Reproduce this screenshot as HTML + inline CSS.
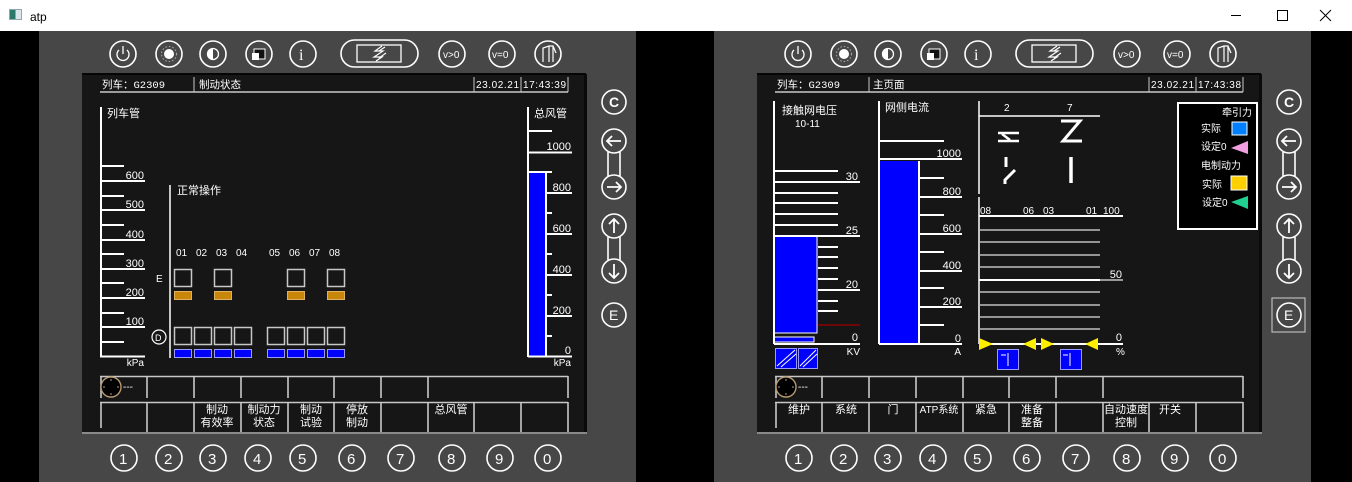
<!DOCTYPE html>
<html><head><meta charset="utf-8"><style>
html,body{margin:0;padding:0;background:#000;width:1352px;height:482px;overflow:hidden}
svg{display:block}
text{font-family:"Liberation Sans","Noto Sans CJK SC","WenQuanYi Zen Hei",sans-serif;fill:#fff;font-size:11px}
.m{font-family:"Liberation Mono","Noto Sans CJK SC",monospace}
.d{font-family:"Liberation Sans",sans-serif;font-size:10px}
.w{stroke:#fff;fill:none}
.g{stroke:#c8c8c8;fill:none}
</style></head><body>
<svg width="1352" height="482" viewBox="0 0 1352 482" xmlns="http://www.w3.org/2000/svg">
<rect x="0" y="0" width="1352" height="31" fill="#fff"/>
<rect x="0" y="31" width="1352" height="451" fill="#000"/>
<rect x="9" y="9" width="13" height="11" fill="#8fa7b4"/><rect x="10" y="10" width="5" height="9" fill="#2a7a6a"/><rect x="16" y="10" width="5" height="9" fill="#dde6ea"/>
<text x="30" y="21" style="fill:#000;font-size:12px">atp</text>
<line x1="1231" y1="15.5" x2="1241" y2="15.5" stroke="#000"/>
<rect x="1277.5" y="10.5" width="10" height="10" fill="none" stroke="#000"/>
<path d="M1320 10 L1331 21 M1331 10 L1320 21" stroke="#000"/>

<defs>
<g id="chrome">
<rect x="39" y="31" width="597" height="451" fill="#474747"/>
<rect x="82" y="74" width="504" height="359" fill="#161616"/>
<rect x="82" y="73" width="504" height="2" fill="#050505"/>
<rect x="584" y="74" width="3" height="359" fill="#0a0a0a"/>
<rect x="82" y="432" width="505" height="2" fill="#8a8a8a"/>
<g class="w" stroke-width="1.6">
<circle cx="123" cy="54" r="13"/><circle cx="169" cy="54" r="13"/><circle cx="213" cy="54" r="13"/><circle cx="259" cy="54" r="13"/><circle cx="303" cy="54" r="13"/>
<rect x="341" y="40" width="77" height="27" rx="13.5"/>
<circle cx="452" cy="54" r="13"/><circle cx="502" cy="54" r="13"/><circle cx="548" cy="54" r="13"/>
<path d="M119 50 A6 6 0 1 0 127 50 M123 46 L123 54" stroke-width="1.3"/>
<rect x="357" y="45" width="44" height="17" stroke-width="1.3"/>
<path d="M382 46 L375 51 L383 51 L374 57 L382 57 L376 61 M385 47 L379 51 M386 53 L379 58" stroke-width="1.2"/>
<path d="M543 62 L543 48 L549 46 L553 46 L553 62 M549 46 L549 62 M553 46 L556 53" stroke-width="1.2"/>
</g>
<circle cx="169" cy="54" r="5" fill="#fff"/>
<circle cx="169" cy="54" r="7.5" fill="none" stroke="#aaa" stroke-dasharray="1.5 2"/>
<circle cx="213" cy="54" r="5.5" fill="none" stroke="#fff" stroke-width="1.3"/>
<path d="M213 48.5 A5.5 5.5 0 0 0 213 59.5 Z" fill="#fff"/>
<rect x="254" y="49" width="11" height="10" fill="#111" stroke="#fff" stroke-width="1"/>
<rect x="252" y="53" width="7" height="7" fill="#fff"/>
<text x="299" y="60" style="font-size:16px;font-family:'Liberation Serif',serif">i</text>
<text x="443" y="58" style="font-size:10px">v&gt;0</text>
<text x="492" y="58" style="font-size:10px">v=0</text>
<g class="w" stroke-width="1.6">
<circle cx="614" cy="102" r="12"/>
<circle cx="614" cy="141" r="12"/><circle cx="614" cy="187" r="12"/>
<line x1="608" y1="152" x2="608" y2="176"/><line x1="620" y1="152" x2="620" y2="176"/>
<circle cx="614" cy="226" r="12"/><circle cx="614" cy="271" r="12"/>
<line x1="608" y1="237" x2="608" y2="260"/><line x1="620" y1="237" x2="620" y2="260"/>
<circle cx="614" cy="315" r="12"/>
<path d="M621 141 L607 141 M612 136 L607 141 L612 146 M607 187 L621 187 M616 182 L621 187 L616 192 M614 233 L614 219 M609 224 L614 219 L619 224 M614 264 L614 278 M609 273 L614 278 L619 273" stroke-width="1.8"/>
</g>
<text x="609" y="107" style="font-size:14px;font-weight:bold">C</text>
<text x="609" y="320" style="font-size:14px">E</text>
<g class="w" stroke-width="1.6">
<circle cx="124" cy="458" r="13"/><circle cx="169" cy="458" r="13"/><circle cx="213" cy="458" r="13"/><circle cx="258" cy="458" r="13"/><circle cx="303" cy="458" r="13"/><circle cx="352" cy="458" r="13"/><circle cx="401" cy="458" r="13"/><circle cx="452" cy="458" r="13"/><circle cx="500" cy="458" r="13"/><circle cx="548" cy="458" r="13"/>
</g>
<g>
<text x="119" y="464" style="font-size:15px">1</text><text x="164" y="464" style="font-size:15px">2</text><text x="208" y="464" style="font-size:15px">3</text><text x="253" y="464" style="font-size:15px">4</text><text x="298" y="464" style="font-size:15px">5</text><text x="347" y="464" style="font-size:15px">6</text><text x="396" y="464" style="font-size:15px">7</text><text x="447" y="464" style="font-size:15px">8</text><text x="495" y="464" style="font-size:15px">9</text><text x="543" y="464" style="font-size:15px">0</text>
</g>
<line x1="100" y1="92" x2="568" y2="92" class="g" stroke-width="1.5"/>
<line x1="194" y1="77" x2="194" y2="92" class="g"/>
<line x1="474" y1="77" x2="474" y2="92" class="g"/>
<line x1="521" y1="77" x2="521" y2="92" class="g"/>
<line x1="568" y1="77" x2="568" y2="92" class="g"/>
<g class="g" stroke-width="1.6">
<line x1="100" y1="376.5" x2="568" y2="376.5"/>
<line x1="100" y1="402.5" x2="568" y2="402.5"/>
<path d="M101 376 V398 M147 376 V398 M194 376 V398 M241 376 V398 M288 376 V398 M334 376 V398 M381 376 V398 M428 376 V398 M568 376 V398"/>
<path d="M101 402 V428 M147 402 V432 M194 402 V432 M241 402 V432 M288 402 V432 M334 402 V432 M381 402 V432 M428 402 V432 M474 402 V432 M521 402 V432 M568 402 V432"/>
</g>
<circle cx="111" cy="387" r="10" fill="#000" stroke="#b89a70" stroke-width="1.4"/>
<path d="M111 379 V381 M111 393 V395 M103 387 H105 M117 387 H119" stroke="#b89a70"/>
<text x="123" y="390" style="font-size:10px">---</text>
</g>
</defs>

<use href="#chrome"/>
<use href="#chrome" transform="translate(675,0)"/>
<rect x="1272" y="298" width="33" height="34" fill="none" stroke="#bbb" stroke-width="1.2"/>

<text x="102" y="88" class="m" style="font-size:10.5px">列车：G2309</text>
<text x="199" y="88" style="font-size:10.5px">制动状态</text>
<text x="476" y="88" class="d" textLength="43">23.02.21</text>
<text x="523" y="88" class="d" textLength="43">17:43:39</text>

<g class="w" stroke-width="2">
<line x1="101" y1="107" x2="101" y2="357"/>
<path d="M100 166 H124 M100 181 H145 M100 196 H124 M100 210 H145 M100 225 H124 M100 240 H145 M100 254 H124 M100 269 H145 M100 283 H124 M100 298 H145 M100 313 H124 M100 327 H145 M100 342 H124 M100 356.5 H145"/>
</g>
<text x="107" y="117">列车管</text>
<text x="144" y="179" text-anchor="end">600</text>
<text x="144" y="208" text-anchor="end">500</text>
<text x="144" y="238" text-anchor="end">400</text>
<text x="144" y="267" text-anchor="end">300</text>
<text x="144" y="296" text-anchor="end">200</text>
<text x="144" y="325" text-anchor="end">100</text>
<text x="144" y="366" text-anchor="end" style="font-size:10px">kPa</text>

<line x1="170" y1="185" x2="170" y2="358" class="w" stroke-width="1.5"/>
<text x="177" y="194">正常操作</text>
<text x="176" y="256" style="font-size:10px">01</text><text x="196" y="256" style="font-size:10px">02</text><text x="216" y="256" style="font-size:10px">03</text><text x="236" y="256" style="font-size:10px">04</text>
<text x="269" y="256" style="font-size:10px">05</text><text x="289" y="256" style="font-size:10px">06</text><text x="309" y="256" style="font-size:10px">07</text><text x="329" y="256" style="font-size:10px">08</text>
<text x="156" y="282" style="font-size:10px">E</text>
<circle cx="159" cy="337" r="7" class="w" stroke-width="1.2"/>
<text x="155" y="341" style="font-size:9px">D</text>
<g fill="none" stroke="#c8c8c8" stroke-width="1.5">
<rect x="174.5" y="269.5" width="17" height="17"/><rect x="214.5" y="269.5" width="17" height="17"/><rect x="287.5" y="269.5" width="17" height="17"/><rect x="327.5" y="269.5" width="17" height="17"/>
<rect x="174.5" y="327.5" width="17" height="17"/><rect x="194.5" y="327.5" width="17" height="17"/><rect x="214.5" y="327.5" width="17" height="17"/><rect x="234.5" y="327.5" width="17" height="17"/>
<rect x="267.5" y="327.5" width="17" height="17"/><rect x="287.5" y="327.5" width="17" height="17"/><rect x="307.5" y="327.5" width="17" height="17"/><rect x="327.5" y="327.5" width="17" height="17"/>
</g>
<g fill="#c8860a" stroke="#e0b060" stroke-width="1">
<rect x="174.5" y="291.5" width="17" height="8"/><rect x="214.5" y="291.5" width="17" height="8"/><rect x="287.5" y="291.5" width="17" height="8"/><rect x="327.5" y="291.5" width="17" height="8"/>
</g>
<g fill="#0000ff" stroke="#9a9aff" stroke-width="1">
<rect x="174.5" y="349.5" width="17" height="8"/><rect x="194.5" y="349.5" width="17" height="8"/><rect x="214.5" y="349.5" width="17" height="8"/><rect x="234.5" y="349.5" width="17" height="8"/>
<rect x="267.5" y="349.5" width="17" height="8"/><rect x="287.5" y="349.5" width="17" height="8"/><rect x="307.5" y="349.5" width="17" height="8"/><rect x="327.5" y="349.5" width="17" height="8"/>
</g>

<rect x="529" y="173" width="17" height="183" fill="#0000ff"/>
<g class="w" stroke-width="2">
<line x1="528" y1="107" x2="528" y2="357"/>
<line x1="546" y1="173" x2="546" y2="357"/>
<path d="M528 131 H552 M528 152.5 H572 M528 172 H552 M546 193 H572 M546 213 H552 M546 234 H572 M546 254 H552 M546 275 H572 M546 295 H552 M546 316 H572 M546 336 H552 M528 356.5 H572"/>
</g>
<text x="534" y="117">总风管</text>
<text x="571" y="150" text-anchor="end">1000</text>
<text x="571" y="191" text-anchor="end">800</text>
<text x="571" y="232" text-anchor="end">600</text>
<text x="571" y="273" text-anchor="end">400</text>
<text x="571" y="314" text-anchor="end">200</text>
<text x="571" y="354" text-anchor="end">0</text>
<text x="571" y="366" text-anchor="end" style="font-size:10px">kPa</text>

<text x="217" y="413" text-anchor="middle">制动</text><text x="217" y="426" text-anchor="middle">有效率</text>
<text x="264" y="413" text-anchor="middle">制动力</text><text x="264" y="426" text-anchor="middle">状态</text>
<text x="311" y="413" text-anchor="middle">制动</text><text x="311" y="426" text-anchor="middle">试验</text>
<text x="357" y="413" text-anchor="middle">停放</text><text x="357" y="426" text-anchor="middle">制动</text>
<text x="451" y="413" text-anchor="middle">总风管</text>

<text x="777" y="88" class="m" style="font-size:10.5px">列车：G2309</text>
<text x="873" y="88" style="font-size:10.5px">主页面</text>
<text x="1151" y="88" class="d" textLength="43">23.02.21</text>
<text x="1198" y="88" class="d" textLength="43">17:43:38</text>

<rect x="774" y="236" width="43" height="97" fill="#0000ff" stroke="#fff" stroke-width="1"/>
<rect x="774" y="337" width="40" height="5" fill="#0000ff" stroke="#fff" stroke-width="1"/>
<g class="w" stroke-width="2">
<line x1="774" y1="101" x2="774" y2="344"/>
<path d="M774 171 H838 M774 182 H860 M774 193 H838 M774 203 H838 M774 214 H838 M774 225 H838 M774 236 H860 M818 247 H838 M818 257 H838 M818 268 H838 M818 279 H838 M818 290 H860 M818 301 H838 M818 311 H838 M774 344 H860"/>
</g>
<line x1="818" y1="325" x2="860" y2="325" stroke="#8a0000" stroke-width="1.5"/>
<text x="782" y="114">接触网电压</text>
<text x="795" y="127" style="font-size:10px">10-11</text>
<text x="858" y="180" text-anchor="end">30</text>
<text x="858" y="234" text-anchor="end">25</text>
<text x="858" y="288" text-anchor="end">20</text>
<text x="858" y="341" text-anchor="end">0</text>
<text x="860" y="355" text-anchor="end" style="font-size:10px">KV</text>
<g fill="#0000ff" stroke="#9a9aff" stroke-width="1">
<rect x="775.5" y="348.5" width="21" height="20"/><rect x="798.5" y="348.5" width="19" height="20"/>
</g>
<path d="M777 366 L795 350 M781 367 L796 354 M800 366 L816 350 M803 367 L817 354" stroke="#fff" stroke-width="1"/>

<rect x="880" y="161" width="38" height="182" fill="#0000ff"/>
<g class="w" stroke-width="2">
<line x1="879" y1="101" x2="879" y2="344"/>
<line x1="919" y1="161" x2="919" y2="344"/>
<path d="M879 141 H944 M879 159 H962 M919 178 H944 M919 197 H962 M919 215 H944 M919 234 H962 M919 252 H944 M919 271 H962 M919 288 H944 M919 307 H962 M919 325 H944 M879 344 H962"/>
</g>
<text x="885" y="111">网侧电流</text>
<text x="961" y="157" text-anchor="end">1000</text>
<text x="961" y="195" text-anchor="end">800</text>
<text x="961" y="232" text-anchor="end">600</text>
<text x="961" y="269" text-anchor="end">400</text>
<text x="961" y="305" text-anchor="end">200</text>
<text x="961" y="342" text-anchor="end">0</text>
<text x="961" y="355" text-anchor="end" style="font-size:10px">A</text>

<g class="w" stroke-width="1.5">
<line x1="979" y1="101" x2="979" y2="194"/>
<line x1="979" y1="116" x2="1100" y2="116"/>
<line x1="979" y1="197" x2="979" y2="344"/>
<line x1="979" y1="216" x2="1123" y2="216" stroke-width="2"/>
</g>
<g stroke="#bdbdbd" stroke-width="1.5">
<path d="M979 230 H1100 M979 242 H1100 M979 255 H1100 M979 267 H1100 M979 292 H1100 M979 305 H1100 M979 317 H1100 M979 329 H1100"/>
</g>
<line x1="979" y1="280" x2="1100" y2="280" stroke="#fff" stroke-width="2"/>
<line x1="1100" y1="280" x2="1123" y2="280" stroke="#999" stroke-width="2"/>
<line x1="979" y1="344" x2="1123" y2="344" stroke="#fff" stroke-width="2"/>
<text x="1004" y="111" style="font-size:10px">2</text>
<text x="1067" y="111" style="font-size:10px">7</text>
<path d="M998 133 H1019 M998 141 H1019 M1002 134 L1010 140" stroke="#fff" stroke-width="2.5" fill="none"/>
<path d="M1061 121 H1080 L1063 141 H1082" stroke="#fff" stroke-width="3" fill="none"/>
<path d="M1006 157 V167 M1015 170 L1005 180 V184" stroke="#fff" stroke-width="3" fill="none"/>
<path d="M1071 157 V183" stroke="#fff" stroke-width="3.5" fill="none"/>
<text x="980" y="214" style="font-size:10px">08</text>
<text x="1023" y="214" style="font-size:10px">06</text>
<text x="1043" y="214" style="font-size:10px">03</text>
<text x="1086" y="214" style="font-size:10px">01</text>
<text x="1103" y="214" style="font-size:10px">100</text>
<text x="1122" y="278" text-anchor="end">50</text>
<text x="1122" y="341" text-anchor="end">0</text>
<text x="1116" y="355" style="font-size:10px">%</text>
<g fill="#ffee00">
<path d="M979 338 L993 344 L979 350 Z"/>
<path d="M1036 338 L1023 344 L1036 350 Z"/>
<path d="M1041 338 L1054 344 L1041 350 Z"/>
<path d="M1098 338 L1085 344 L1098 350 Z"/>
</g>
<g fill="#0000ff" stroke="#9a9aff" stroke-width="1">
<rect x="997.5" y="349.5" width="21" height="20"/><rect x="1060.5" y="349.5" width="21" height="20"/>
</g>
<path d="M1001 355 H1006 M1008 353 V366 M1063 355 H1068 M1070 353 V366" stroke="#fff" stroke-width="1"/>

<rect x="1178" y="103" width="79" height="126" fill="#000" stroke="#fff" stroke-width="2"/>
<text x="1222" y="116" style="font-size:10px">牵引力</text>
<text x="1201" y="132" style="font-size:10px">实际</text>
<rect x="1232" y="122" width="15" height="13" fill="#0080ff" stroke="#fff" stroke-width="1"/>
<text x="1201" y="150" style="font-size:10px">设定0</text>
<path d="M1248 141 L1231 148 L1248 154 Z" fill="#f0a0e0"/>
<text x="1201" y="169" style="font-size:10px">电制动力</text>
<text x="1202" y="188" style="font-size:10px">实际</text>
<rect x="1231" y="176" width="16" height="14" fill="#ffd000" stroke="#fff" stroke-width="1"/>
<text x="1202" y="206" style="font-size:10px">设定0</text>
<path d="M1248 196 L1231 202 L1248 209 Z" fill="#20d090"/>

<text x="799" y="413" text-anchor="middle">维护</text>
<text x="846" y="413" text-anchor="middle">系统</text>
<text x="893" y="413" text-anchor="middle">门</text>
<text x="939" y="413" text-anchor="middle" style="font-size:10px">ATP系统</text>
<text x="986" y="413" text-anchor="middle">紧急</text>
<text x="1032" y="413" text-anchor="middle">准备</text><text x="1032" y="426" text-anchor="middle">整备</text>
<text x="1126" y="413" text-anchor="middle">自动速度</text><text x="1126" y="426" text-anchor="middle">控制</text>
<text x="1170" y="413" text-anchor="middle">开关</text>
</svg>
</body></html>
